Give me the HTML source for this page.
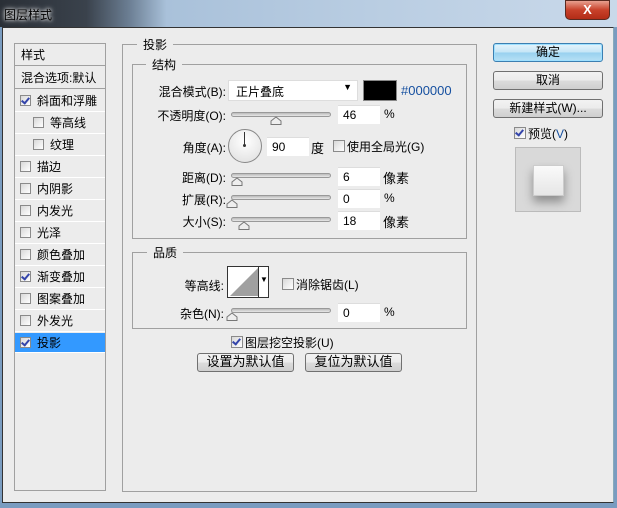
<!DOCTYPE html>
<html><head><meta charset="utf-8"><style>
*{margin:0;padding:0;box-sizing:border-box}
body{width:617px;height:508px;overflow:hidden;font-family:"Liberation Sans","Noto Sans CJK SC",sans-serif;font-size:12px;color:#000;background:#7a9cc0;position:relative}
.a{position:absolute}
.title{left:0;top:0;width:617px;height:27px;background:linear-gradient(90deg,#2a2f36 0%,#3a424c 14%,#6c7f94 21%,#a9c1da 27%,#b9cde2 60%,#c9d9ea 100%)}
.tt{left:4px;top:6px;color:#000;font-size:12px;text-shadow:0 0 6px #fff,0 0 3px #fff}
.close{left:565px;top:0;width:45px;height:20px;border-radius:0 0 5px 5px;background:linear-gradient(#e8a08f,#c8412a 50%,#b22c17);border:1px solid #5a2a20;color:#fff;font-weight:bold;text-align:center;font-size:13px;line-height:18px}
.win{left:2px;top:27px;width:612px;height:476px;background:#ececec;border:1px solid #333;border-right:1px solid #8ab}
.list{left:14px;top:43px;width:92px;height:448px;border:1px solid #a0a0a0;background:#ececec}
.row{position:absolute;left:0;width:90px;height:22px;border-bottom:1px solid #fff;line-height:22px;font-size:12px}
.cb{display:inline-block;width:11px;height:11px;border:1px solid #8a8a8a;background:linear-gradient(135deg,#d8d8d8,#fff);vertical-align:-1px;margin-right:6px;position:relative}
.cb.on::after{content:"";position:absolute;left:2px;top:0px;width:3px;height:6px;border:solid #3344aa;border-width:0 2px 2px 0;transform:rotate(40deg)}
.grp{border:1px solid #a0a0a0}
.lg{background:#ececec;padding:0 6px}
.lbl{text-align:right}
.track{height:5px;border:1px solid #999;border-radius:3px;background:linear-gradient(#bbb,#e8e8e8)}
.th{width:11px;height:8px}
.in{background:#fff;height:19px;line-height:19px;padding-left:5px;border-top:1px solid #ddd}
.btn{border:1px solid #707070;border-radius:3px;background:linear-gradient(#f2f2f2 0%,#ebebeb 50%,#dcdcdc 51%,#cfcfcf);text-align:center;line-height:16px;font-size:12px}
.blue{color:#1650a0}
</style></head><body>
<div class="a title"></div>
<div class="a tt">图层样式</div>
<div class="a close">X</div>
<div class="a win"></div>

<div class="a list">
 <div class="row" style="top:0;padding-left:6px;border-bottom:1px solid #a0a0a0">样式</div>
 <div class="row" style="top:23px;padding-left:6px;border-bottom:1px solid #a0a0a0">混合选项:默认</div>
 <div class="row" style="top:46px;padding-left:5px"><span class="cb on"></span>斜面和浮雕</div>
 <div class="row" style="top:68px;padding-left:18px"><span class="cb"></span>等高线</div>
 <div class="row" style="top:90px;padding-left:18px"><span class="cb"></span>纹理</div>
 <div class="row" style="top:112px;padding-left:5px"><span class="cb"></span>描边</div>
 <div class="row" style="top:134px;padding-left:5px"><span class="cb"></span>内阴影</div>
 <div class="row" style="top:156px;padding-left:5px"><span class="cb"></span>内发光</div>
 <div class="row" style="top:178px;padding-left:5px"><span class="cb"></span>光泽</div>
 <div class="row" style="top:200px;padding-left:5px"><span class="cb"></span>颜色叠加</div>
 <div class="row" style="top:222px;padding-left:5px"><span class="cb on"></span>渐变叠加</div>
 <div class="row" style="top:244px;padding-left:5px"><span class="cb"></span>图案叠加</div>
 <div class="row" style="top:266px;padding-left:5px"><span class="cb"></span>外发光</div>
 <div class="row" style="top:289px;padding-left:5px;background:#3399ff;height:20px;line-height:20px"><span class="cb on"></span>投影</div>
</div>

<div class="a grp" style="left:122px;top:44px;width:355px;height:448px"></div>
<div class="a lg" style="left:137px;top:36px">投影</div>
<div class="a grp" style="left:132px;top:64px;width:335px;height:175px"></div>
<div class="a lg" style="left:146px;top:56px">结构</div>

<div class="a lbl" style="left:140px;top:83px;width:86px">混合模式(B):</div>
<div class="a" style="left:228px;top:80px;width:130px;height:21px;background:#fff;border:1px solid #ddd;padding:2px 0 0 7px">正片叠底<span style="position:absolute;right:5px;top:1px;font-size:9px">▼</span></div>
<div class="a" style="left:363px;top:80px;width:34px;height:21px;background:#000;border:1px solid #888"></div>
<div class="a blue" style="left:401px;top:83px;font-size:13px">#000000</div>

<div class="a lbl" style="left:140px;top:107px;width:86px">不透明度(O):</div>
<div class="a track" style="left:231px;top:112px;width:100px"></div>
<div class="a th" style="left:270px;top:114px"><svg width="12" height="9"><path d="M1 8.5 L1 5 L6 1 L11 5 L11 8.5Z" fill="#eee" stroke="#777"/></svg></div>
<div class="a in" style="left:338px;top:105px;width:42px">46</div>
<div class="a" style="left:384px;top:107px">%</div>

<div class="a lbl" style="left:140px;top:139px;width:86px">角度(A):</div>
<div class="a" style="left:228px;top:129px;width:34px;height:34px;border-radius:50%;border:1px solid #888;background:radial-gradient(circle at 50% 35%,#fff,#ddd)"></div>
<div class="a" style="left:244px;top:132px;width:1px;height:13px;background:#333"></div>
<div class="a" style="left:243px;top:144px;width:3px;height:3px;background:#333;border-radius:50%"></div>
<div class="a in" style="left:267px;top:137px;width:42px">90</div>
<div class="a" style="left:311px;top:138px;font-size:13px">度</div>
<div class="a" style="left:333px;top:138px"><span class="cb" style="width:12px;height:12px;margin-right:2px"></span>使用全局光(G)</div>

<div class="a lbl" style="left:140px;top:169px;width:86px">距离(D):</div>
<div class="a track" style="left:231px;top:173px;width:100px"></div>
<div class="a th" style="left:231px;top:175px"><svg width="12" height="9"><path d="M1 8.5 L1 5 L6 1 L11 5 L11 8.5Z" fill="#eee" stroke="#777"/></svg></div>
<div class="a in" style="left:338px;top:167px;width:42px">6</div>
<div class="a" style="left:383px;top:168px;font-size:13px">像素</div>

<div class="a lbl" style="left:140px;top:191px;width:86px">扩展(R):</div>
<div class="a track" style="left:231px;top:195px;width:100px"></div>
<div class="a th" style="left:226px;top:197px"><svg width="12" height="9"><path d="M1 8.5 L1 5 L6 1 L11 5 L11 8.5Z" fill="#eee" stroke="#777"/></svg></div>
<div class="a in" style="left:338px;top:189px;width:42px">0</div>
<div class="a" style="left:384px;top:191px">%</div>

<div class="a lbl" style="left:140px;top:213px;width:86px">大小(S):</div>
<div class="a track" style="left:231px;top:217px;width:100px"></div>
<div class="a th" style="left:238px;top:219px"><svg width="12" height="9"><path d="M1 8.5 L1 5 L6 1 L11 5 L11 8.5Z" fill="#eee" stroke="#777"/></svg></div>
<div class="a in" style="left:338px;top:211px;width:42px">18</div>
<div class="a" style="left:383px;top:212px;font-size:13px">像素</div>

<div class="a grp" style="left:132px;top:252px;width:335px;height:77px"></div>
<div class="a lg" style="left:147px;top:244px">品质</div>
<div class="a lbl" style="left:140px;top:277px;width:84px">等高线:</div>
<div class="a" style="left:227px;top:266px;width:42px;height:32px;border:1px solid #333;background:#fff">
 <svg width="30" height="30" style="position:absolute;left:1px;top:0"><path d="M1 29 L29 1 L29 29Z" fill="#a0a0a0"/></svg>
 <div style="position:absolute;left:30px;top:0;width:1px;height:30px;background:#333"></div>
 <div style="position:absolute;left:32px;top:8px;font-size:8px">▼</div>
</div>
<div class="a" style="left:282px;top:276px"><span class="cb" style="width:12px;height:12px;margin-right:2px"></span>消除锯齿(L)</div>
<div class="a lbl" style="left:140px;top:305px;width:84px">杂色(N):</div>
<div class="a track" style="left:231px;top:308px;width:100px"></div>
<div class="a th" style="left:226px;top:310px"><svg width="12" height="9"><path d="M1 8.5 L1 5 L6 1 L11 5 L11 8.5Z" fill="#eee" stroke="#777"/></svg></div>
<div class="a in" style="left:338px;top:303px;width:42px">0</div>
<div class="a" style="left:384px;top:305px">%</div>

<div class="a" style="left:231px;top:334px"><span class="cb on" style="width:12px;height:12px;margin-right:2px"></span>图层挖空投影(U)</div>
<div class="a btn" style="left:197px;top:353px;width:97px;height:19px;font-size:13px">设置为默认值</div>
<div class="a btn" style="left:305px;top:353px;width:97px;height:19px;font-size:13px">复位为默认值</div>

<div class="a btn" style="left:493px;top:43px;width:110px;height:19px;border-color:#3c7fb1;background:linear-gradient(#e5f4fc,#c4e5f6 50%,#98d1ef 51%,#b7e0f5);box-shadow:0 0 0 1px #9ee0ff inset">确定</div>
<div class="a btn" style="left:493px;top:71px;width:110px;height:19px">取消</div>
<div class="a btn" style="left:493px;top:99px;width:110px;height:19px">新建样式(W)...</div>
<div class="a" style="left:514px;top:125px"><span class="cb on" style="width:12px;height:12px;margin-right:2px"></span>预览(<span class="blue">V</span>)</div>
<div class="a" style="left:515px;top:147px;width:66px;height:65px;border:1px solid #bbb;background:#d9d9d9">
 <div style="position:absolute;left:17px;top:17px;width:31px;height:31px;background:linear-gradient(#fafafa,#e6e6e6);border:1px solid #ccc;box-shadow:0 6px 9px rgba(0,0,0,.35)"></div>
</div>
</body></html>
